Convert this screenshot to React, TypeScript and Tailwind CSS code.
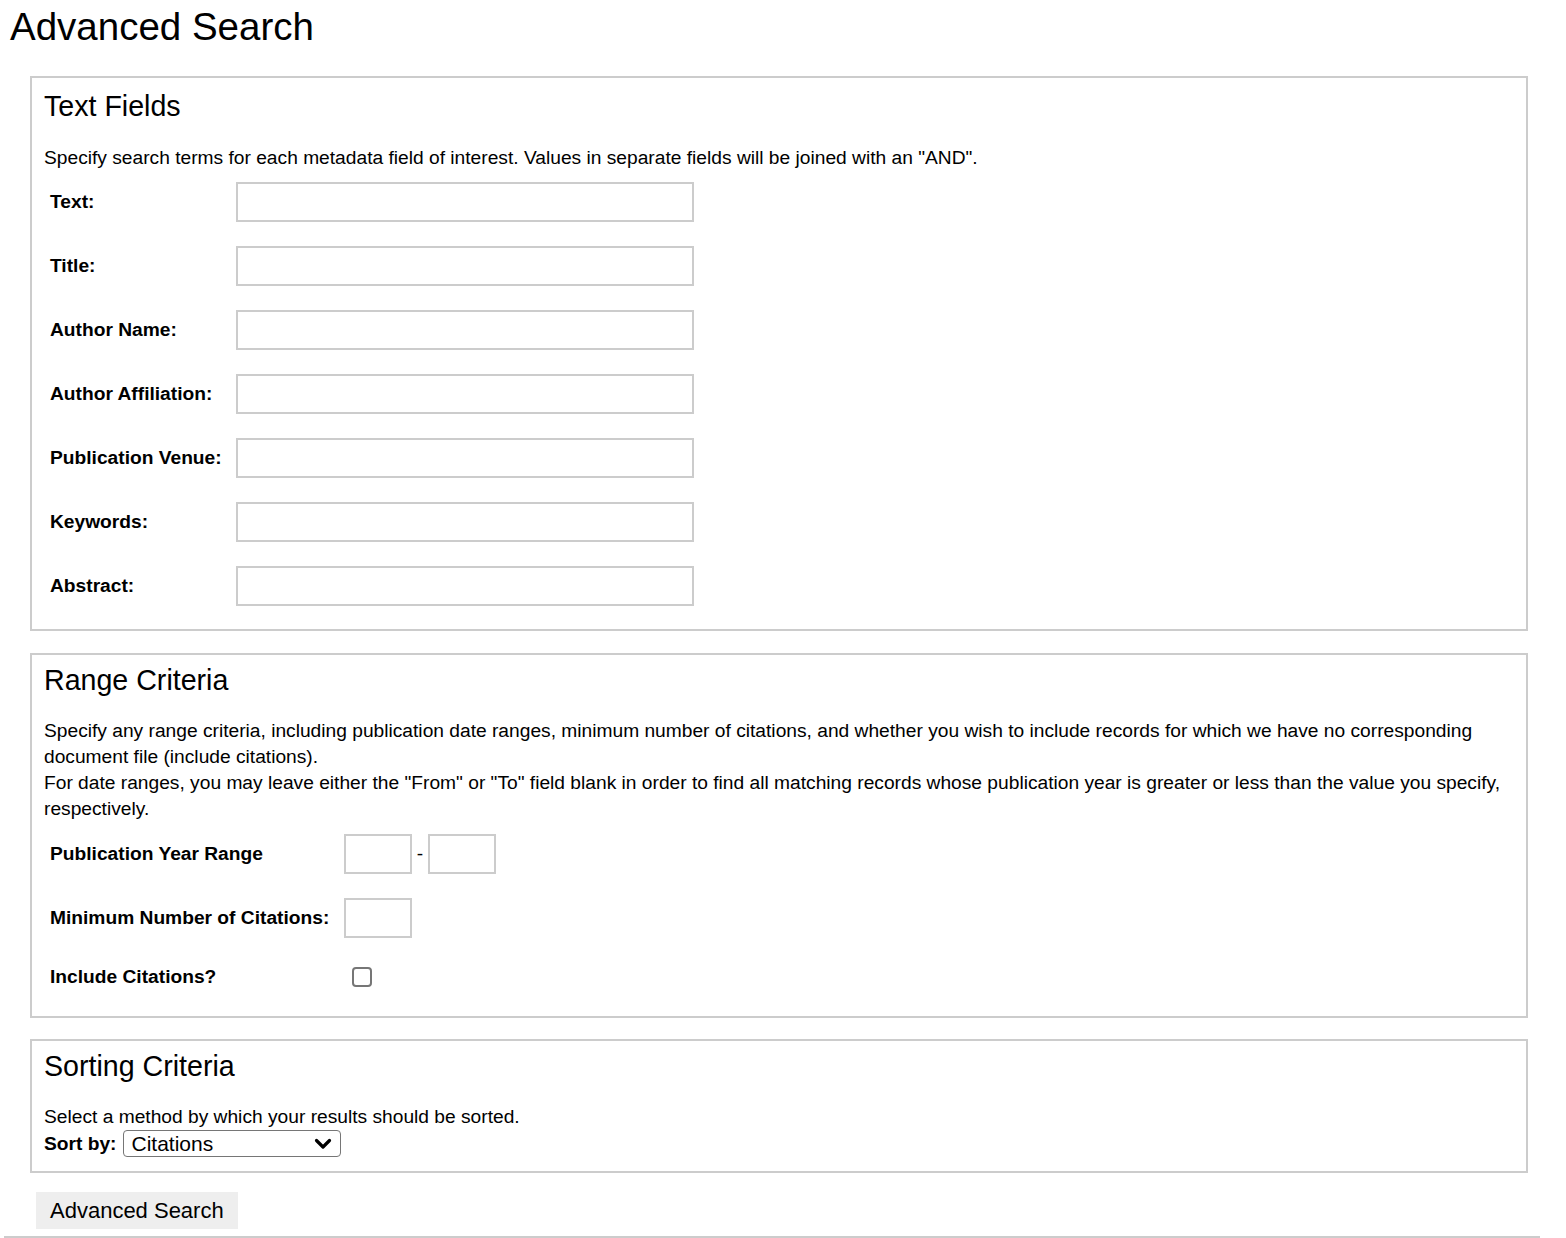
import React from "react";

const textFields = [
  "Text:",
  "Title:",
  "Author Name:",
  "Author Affiliation:",
  "Publication Venue:",
  "Keywords:",
  "Abstract:",
];

const font = "font-['Liberation_Sans',Arial,sans-serif]";

function Panel({
  title,
  top,
  bottom,
  children,
}: {
  title: string;
  top: string;
  bottom: string;
  children: React.ReactNode;
}) {
  return (
    <div className={`ml-[20px] w-[1498px] border-2 border-[#cccccc] px-[12px] ${top} ${bottom}`}>
      <h2 className="text-[28.6px] leading-[32px] text-black">{title}</h2>
      {children}
    </div>
  );
}

function Field({ w }: { w: string }) {
  return <input type="text" className={`${w} h-[40px] border-2 border-[#cccccc] bg-white`} />;
}

export default function App() {
  return (
    <div className={`${font} bg-white text-black min-h-[1238px] pl-[10px]`}>
      <h1 className="pt-[5px] text-[38.5px] leading-[44px]">Advanced Search</h1>

      <div className="mt-[27px]">
        <Panel title="Text Fields" top="pt-[12px]" bottom="pb-[23px]">
          <p className="mt-[23px] text-[19.2px] leading-[26px]">
            Specify search terms for each metadata field of interest. Values in separate fields will be joined with an
            "AND".
          </p>
          <div className="mt-[11px] flex flex-col gap-[24px] pl-[6px]">
            {textFields.map((l) => (
              <div key={l} className="flex items-center">
                <label className="w-[186px] text-[19.2px] leading-[26px] font-bold">{l}</label>
                <Field w="w-[458px]" />
              </div>
            ))}
          </div>
        </Panel>
      </div>

      <div className="mt-[22px]">
        <Panel title="Range Criteria" top="pt-[9px]" bottom="pb-[24px]">
          <p className="mt-[22px] text-[19.2px] leading-[26px] pr-[2px]">
            Specify any range criteria, including publication date ranges, minimum number of citations, and whether you
            wish to include records for which we have no corresponding document file (include citations).
            <br />
            For date ranges, you may leave either the "From" or "To" field blank in order to find all matching records
            whose publication year is greater or less than the value you specify, respectively.
          </p>
          <div className="mt-[12px] flex flex-col gap-[24px] pl-[6px] text-[19.2px] leading-[26px] font-bold">
            <div className="flex items-center">
              <label className="w-[294px]">Publication Year Range</label>
              <Field w="w-[68px]" />
              <span className="w-[16px] text-center font-normal">-</span>
              <Field w="w-[68px]" />
            </div>
            <div className="flex items-center">
              <label className="w-[294px]">Minimum Number of Citations:</label>
              <Field w="w-[68px]" />
            </div>
            <div className="flex items-center h-[30px]">
              <label className="w-[294px]">Include Citations?</label>
              <span className="ml-[8px] block w-[20px] h-[20px] rounded-[4px] border-2 border-[#767676] bg-white" />
            </div>
          </div>
        </Panel>
      </div>

      <div className="mt-[21px]">
        <Panel title="Sorting Criteria" top="pt-[9px]" bottom="pb-[14px]">
          <p className="mt-[22px] text-[19.2px] leading-[26px]">Select a method by which your results should be sorted.</p>
          <div className="flex items-center h-[27px]">
            <label className="text-[19.2px] leading-[26px] font-bold mr-[6px]">Sort by:</label>
            <div className="w-[218px] h-[27px] rounded-[4px] border border-[#767676] flex items-center justify-between pl-[8px] pr-[8px] text-[21px] leading-[25px]">
              <span>Citations</span>
              <svg width="18" height="12" viewBox="0 0 18 12">
                <path d="M2.5 2.5 L9 9 L15.5 2.5" fill="none" stroke="black" strokeWidth="3.2" strokeLinecap="round" strokeLinejoin="round" />
              </svg>
            </div>
          </div>
        </Panel>
      </div>

      <div className="mt-[19px] ml-[26px] flex">
        <button className="bg-[#eeeeee] h-[37px] px-[14px] text-[22px] leading-[37px]">Advanced Search</button>
      </div>
      <div className="mt-[7px] -ml-[6px] w-[1536px] h-[2px] bg-[#cccccc]" />
    </div>
  );
}
